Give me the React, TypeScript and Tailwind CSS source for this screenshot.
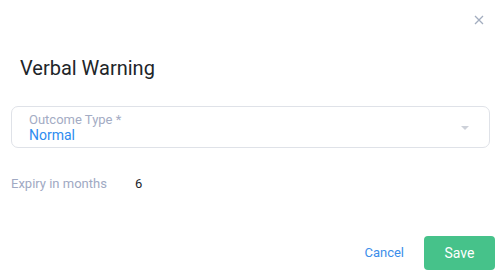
import React from "react";

const font = { fontFamily: "Roboto, 'Liberation Sans', sans-serif" };

export default function App() {
  return (
    <div className="w-[501px] h-[277px] bg-white flex flex-col" style={font}>
      {/* Header close */}
      <div className="flex justify-end pt-[14px] pr-[16px] h-[40px]">
        <button type="button" className="w-[12px] h-[12px] flex items-center justify-center text-[#a3adbf]">
          <svg width="10" height="10" viewBox="0 0 10 10" fill="none" stroke="currentColor" strokeWidth="1.3">
            <path d="M1 1L9 9M9 1L1 9" />
          </svg>
        </button>
      </div>

      <h2 className="pl-[20px] mt-[15px] text-[20px] leading-[26px] text-[#212529] font-normal">
        Verbal Warning
      </h2>

      <div className="px-[11px] mt-[25px]">
        <div className="h-[42px] border border-[#dfe2e8] rounded-[7px] flex items-center justify-between pl-[17px] pr-[20px]">
          <div className="flex flex-col">
            <span className="text-[13px] leading-[15px] text-[#a4acc4]">Outcome Type *</span>
            <span className="text-[14px] leading-[16px] text-[#2d8cf0]">Normal</span>
          </div>
          <svg width="8" height="5" viewBox="0 0 8 5" className="mt-[2px]">
            <path d="M0 0H8L4 4Z" fill="#cdd1d9" />
          </svg>
        </div>
      </div>

      <div className="flex items-center pl-[11px] mt-[27px] text-[13px] leading-[18px]">
        <span className="w-[124px] text-[#a0a9c3]">Expiry in months</span>
        <span className="text-[#212529]">6</span>
      </div>

      <div className="flex justify-end items-center gap-[20px] pr-[6px] mt-auto mb-[7px]">
        <button type="button" className="text-[13px] text-[#3b8eea] px-[0px]">
          Cancel
        </button>
        <button
          type="button"
          className="w-[71px] h-[34px] rounded-[4px] bg-[#46c28a] text-white text-[14px]"
        >
          Save
        </button>
      </div>
    </div>
  );
}
